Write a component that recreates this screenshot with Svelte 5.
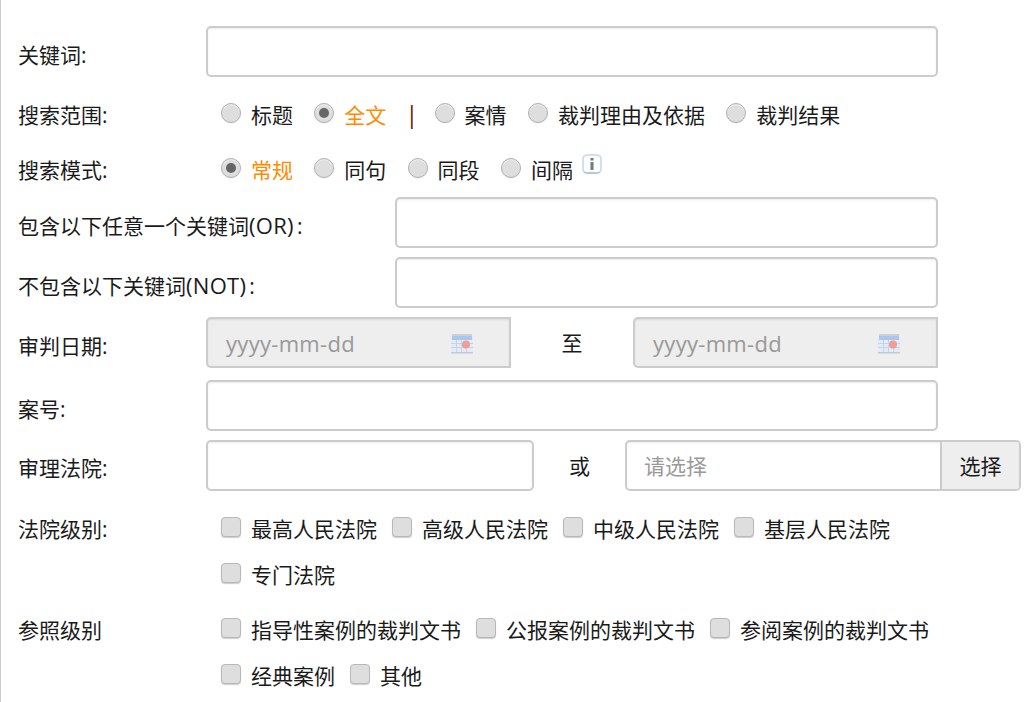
<script>
  const scope2 = ['案情', '裁判理由及依据', '裁判结果'];
  const mode = [
    { t: '常规', on: true },
    { t: '同句' },
    { t: '同段' },
    { t: '间隔' }
  ];
  const court1 = ['最高人民法院', '高级人民法院', '中级人民法院', '基层人民法院'];
  const ref1 = ['指导性案例的裁判文书', '公报案例的裁判文书', '参阅案例的裁判文书'];
  const ref2 = ['经典案例', '其他'];
</script>

{#snippet radio(t, on)}
  <span class="opt">
    <span class="radio" class:checked={on}></span>
    <span class="txt" class:on>{t}</span>
  </span>
{/snippet}

{#snippet check(t)}
  <span class="opt chk">
    <span class="box"></span>
    <span class="txt">{t}</span>
  </span>
{/snippet}

{#snippet calendar()}
  <svg class="cal" width="22" height="20" viewBox="0 0 22 20" aria-hidden="true">
    <rect x="0" y="1" width="22" height="18" fill="#e3ebf8" />
    <rect x="1" y="2" width="20" height="4" fill="#a9c6f0" />
    <rect x="1" y="0" width="20" height="2" fill="#cfcfcf" />
    <path d="M5.500 6v12M10.500 6v12M15.500 6v12M0 9.500h22M0 13.500h22" stroke="#c6d3e8" stroke-width="1" />
    <circle cx="15" cy="10.500" r="4" fill="#ee9f92" />
    <rect x="0" y="18" width="22" height="1.500" fill="#c4c9d4" />
  </svg>
{/snippet}

<div class="page">
  <div class="row up">
    <span class="label">关键词:</span>
    <div class="input wide"></div>
  </div>

  <div class="row r-scope">
    <span class="label">搜索范围:</span>
    <div class="opts">
      {@render radio('标题', false)}
      {@render radio('全文', true)}
      <span class="sep">|</span>
      {#each scope2 as t}{@render radio(t, false)}{/each}
    </div>
  </div>

  <div class="row r-mode">
    <span class="label">搜索模式:</span>
    <div class="opts">
      {#each mode as m}{@render radio(m.t, m.on)}{/each}
      <span class="info"><svg width="4" height="12" viewBox="0 0 4 12" aria-hidden="true"><path d="M.5 0h3v2.500h-3zM.5 4h3v8h-3z" fill="#777" /></svg></span>
    </div>
  </div>

  <div class="row r-or up">
    <span class="label long">包含以下任意一个关键词<span class="lat">(OR)</span><span class="colon">:</span></span>
    <div class="input fill"></div>
  </div>

  <div class="row r-next up">
    <span class="label long">不包含以下关键词<span class="lat">(NOT)</span><span class="colon">:</span></span>
    <div class="input fill"></div>
  </div>

  <div class="row r-next up">
    <span class="label">审判日期:</span>
    <div class="date">
      <span class="ph lat">yyyy-mm-dd</span>
      {@render calendar()}
    </div>
    <span class="to">至</span>
    <div class="date">
      <span class="ph lat">yyyy-mm-dd</span>
      {@render calendar()}
    </div>
  </div>

  <div class="row r-case up">
    <span class="label">案号:</span>
    <div class="input wide"></div>
  </div>

  <div class="row r-next">
    <span class="label">审理法院:</span>
    <div class="input court"></div>
    <span class="or">或</span>
    <div class="group">
      <span class="ph">请选择</span>
      <span class="pick">选择</span>
    </div>
  </div>

  <div class="block r-level">
    <span class="label">法院级别:</span>
    <div class="checks">
      <div class="line">{#each court1 as t}{@render check(t)}{/each}</div>
      <div class="line">{@render check('专门法院')}</div>
    </div>
  </div>

  <div class="block r-ref">
    <span class="label">参照级别</span>
    <div class="checks">
      <div class="line">{#each ref1 as t}{@render check(t)}{/each}</div>
      <div class="line">{#each ref2 as t}{@render check(t)}{/each}</div>
    </div>
  </div>
</div>

<style>
  :global(body) {
    margin: 0;
    background: #fff;
  }
  .page {
    box-sizing: border-box;
    width: 1036px;
    height: 702px;
    overflow: hidden;
    border-left: 1px solid #ccc;
    padding: 26px 0 0 17px;
    font: 21px/30px "Open Sans", "Noto Sans CJK SC", sans-serif;
    color: #1a1a1a;
  }
  .row {
    display: flex;
    align-items: center;
    height: 51px;
  }
  .r-scope {
    height: 30px;
    margin-top: 21px;
  }
  .r-mode {
    height: 30px;
    margin-top: 25px;
  }
  .r-or {
    margin-top: 14px;
  }
  .r-next {
    margin-top: 9px;
  }
  .r-case {
    margin-top: 12px;
  }
  .label {
    flex: none;
    width: 188px;
    position: relative;
    top: 2px;
  }
  .up .label {
    top: 3px;
  }
  .label.long {
    width: 377px;
    white-space: nowrap;
  }
  .lat {
    font-size: 22px;
    letter-spacing: 0.3px;
  }
  .colon {
    margin-left: 3px;
  }
  .input,
  .date,
  .group {
    box-sizing: border-box;
    height: 51px;
    border: 2px solid #ccc;
    border-radius: 5px;
    background: #fff;
    box-shadow: inset 0 1px 2px rgba(0, 0, 0, 0.08);
  }
  .wide {
    width: 732px;
  }
  .fill {
    width: 543px;
  }
  .court {
    width: 328px;
  }
  .date {
    width: 305px;
    background: #eee;
    border-radius: 5px 0 0 5px;
    display: flex;
    align-items: center;
    justify-content: space-between;
    padding: 0 36px 0 18px;
  }
  .ph {
    color: #999;
  }
  .cal {
    flex: none;
    position: relative;
    top: 1px;
    filter: blur(0.4px);
  }
  .to {
    width: 122px;
    text-align: center;
  }
  .or {
    width: 91px;
    text-align: center;
  }
  .group {
    width: 396px;
    display: flex;
    align-items: stretch;
    padding-left: 17px;
    overflow: hidden;
    justify-content: space-between;
  }
  .group .ph {
    align-self: center;
  }
  .pick {
    box-sizing: border-box;
    width: 79px;
    background: #eee;
    border-left: 2px solid #ccc;
    display: flex;
    align-items: center;
    justify-content: center;
  }
  .opts {
    display: flex;
    align-items: center;
    margin-left: 15px;
    white-space: nowrap;
  }
  .opt {
    display: inline-flex;
    align-items: center;
    margin-right: 21.300px;
  }
  .opt .txt {
    position: relative;
    top: 2px;
  }
  .txt.on {
    color: #ff8c00;
  }
  .radio {
    flex: none;
    box-sizing: border-box;
    width: 20px;
    height: 20px;
    margin-right: 10px;
    border: 1px solid #b0b0b0;
    border-radius: 50%;
    background: #dedede;
    box-shadow: inset 0 1px 1px rgba(255, 255, 255, 0.6), 0 1px 0 rgba(0, 0, 0, 0.05);
    display: flex;
    align-items: center;
    justify-content: center;
  }
  .radio.checked::after {
    content: "";
    width: 10px;
    height: 10px;
    border-radius: 50%;
    background: #666;
  }
  .sep {
    color: #6b1500;
    font-size: 23px;
    width: 29px;
    margin-left: -2px;
    position: relative;
    top: 1px;
  }
  .info {
    box-sizing: border-box;
    width: 20px;
    height: 20px;
    margin-left: -13px;
    border: 2px solid #d3dfec;
    border-bottom-color: #b4c9df;
    border-radius: 5px;
    background: #fff;
    display: flex;
    align-items: center;
    justify-content: center;
    position: relative;
    top: -4px;
    left: 1px;
  }
  .block {
    display: flex;
    align-items: flex-start;
  }
  .r-level {
    margin-top: 24px;
  }
  .r-ref {
    margin-top: 25px;
  }
  .block .label {
    top: -1px;
  }
  .checks {
    margin-left: 15px;
    display: flex;
    flex-direction: column;
    gap: 16px;
  }
  .line {
    display: flex;
    white-space: nowrap;
  }
  .opt.chk {
    margin-right: 15px;
  }
  .chk .txt {
    top: -1px;
  }
  .box {
    flex: none;
    box-sizing: border-box;
    width: 20px;
    height: 20px;
    margin-right: 10px;
    position: relative;
    top: -3px;
    border: 1px solid #b8b8b8;
    border-radius: 4px;
    background: #dedede;
    box-shadow: 0 1px 1px rgba(0, 0, 0, 0.2);
  }
</style>
